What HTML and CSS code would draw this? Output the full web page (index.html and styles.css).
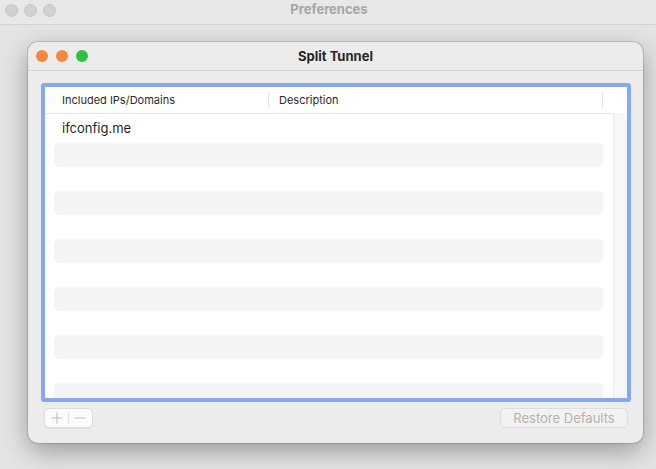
FILE: index.html
```html
<!DOCTYPE html>
<html>
<head>
<meta charset="utf-8">
<link rel="stylesheet" href="styles.css">
</head>
<body>
<div class="prefs-bar">
  <div class="lights">
    <span class="light gray"></span>
    <span class="light gray"></span>
    <span class="light gray"></span>
  </div>
  <div class="prefs-title">Preferences</div>
</div>
<div class="stage">
  <div class="sheet">
    <div class="sheet-bar">
      <div class="lights sheet-lights">
        <span class="light orange"></span>
        <span class="light orange"></span>
        <span class="light green"></span>
      </div>
      <div class="sheet-title">Split Tunnel</div>
    </div>
    <div class="sheet-body">
      <div class="ring">
        <div class="table-head">
          <div class="th th-main">Included IPs/Domains</div>
          <div class="th th-desc">Description</div>
          <div class="th-rest"></div>
        </div>
        <div class="table-body">
          <div class="rows">
            <div class="row"><span class="cell">ifconfig.me</span></div>
            <div class="row alt"></div>
            <div class="row"></div>
            <div class="row alt"></div>
            <div class="row"></div>
            <div class="row alt"></div>
            <div class="row"></div>
            <div class="row alt"></div>
            <div class="row"></div>
            <div class="row alt"></div>
            <div class="row"></div>
            <div class="row alt"></div>
          </div>
          <div class="track"></div>
        </div>
      </div>
      <div class="footer">
        <div class="seg">
          <span class="seg-btn">
            <svg width="12" height="12" viewBox="0 0 12 12"><path d="M6 0.5V11.5M0.5 6H11.5" stroke="#bdbdbd" stroke-width="1.1" fill="none"/></svg>
          </span>
          <span class="seg-div"></span>
          <span class="seg-btn">
            <svg width="12" height="12" viewBox="0 0 12 12"><path d="M0.5 6H11.5" stroke="#bdbdbd" stroke-width="1.1" fill="none"/></svg>
          </span>
        </div>
        <div class="restore">Restore Defaults</div>
      </div>
    </div>
  </div>
</div>
</body>
</html>
```

FILE: styles.css
```css
* { box-sizing: border-box; }
html, body { margin: 0; padding: 0; }
body {
  width: 656px;
  height: 469px;
  overflow: hidden;
  background: #e4e4e4;
  font-family: Inter, "Noto Sans", "Liberation Sans", sans-serif;
  color: #222;
}
.prefs-bar {
  position: relative;
  height: 25px;
  background: #e8e8e8;
  border-bottom: 1px solid #d2d2d2;
  display: flex;
  align-items: center;
  justify-content: center;
}
.lights {
  position: absolute;
  left: 5px;
  top: 4px;
  display: flex;
  gap: 7px;
}
.light {
  width: 12px;
  height: 12px;
  border-radius: 50%;
  display: block;
}
.light.gray { width: 13px; height: 13px; background: #d1d1d1; border: 1px solid #c6c6c6; }
.prefs-bar .lights { gap: 6px; }
.light.orange { background: #f6883d; }
.light.green { background: #2bc43c; }
.prefs-title {
  font-size: 13px;
  font-weight: 700;
  color: #a6a6a6;
  margin-top: -6px;
  margin-left: 2px;
}
.stage {
  padding: 17px 0 0 28px;
}
.sheet {
  width: 615px;
  height: 401px;
  background: #ececec;
  border-radius: 10px;
  box-shadow: 0 0 0 1px rgba(0,0,0,0.13), 0 8px 26px rgba(0,0,0,0.33);
  overflow: hidden;
}
.sheet-bar {
  position: relative;
  height: 29px;
  border-bottom: 1px solid #d4d4d4;
  display: flex;
  align-items: center;
  justify-content: center;
}
.sheet-lights {
  left: 8px;
  top: 8px;
  gap: 8px;
}
.sheet-title {
  font-size: 13px;
  font-weight: 700;
  color: #262626;
}
.sheet-body {
  padding: 12px 12px 0 13px;
}
.ring {
  width: 590px;
  height: 319px;
  border: 4px solid #86a9f2;
  border-radius: 3px;
  background: #fff;
  display: flex;
  flex-direction: column;
  overflow: hidden;
}
.table-head {
  height: 26px;
  display: flex;
  align-items: center;
  flex: none;
}
.th {
  font-size: 11px;
  color: #2c2c2c;
  height: 16px;
  line-height: 16px;
}
.th-main {
  width: 224px;
  padding-left: 17px;
  border-right: 1px solid #e2e2e2;
}
.th-desc {
  width: 334px;
  padding-left: 10px;
  border-right: 1px solid #e2e2e2;
}
.th-rest { flex: 1; }
.table-body {
  flex: 1;
  display: flex;
  min-height: 0;
}
.rows {
  width: 568px;
  border-top: 1px solid #e4e4e4;
  padding: 5px 10px 0 9px;
  overflow: hidden;
}
.row {
  height: 24px;
  border-radius: 5px;
  display: flex;
  align-items: center;
}
.row.alt { background: #f4f4f4; }
.cell {
  font-size: 13px;
  color: #1f1f1f;
  padding-left: 8px;
  margin-top: -6px;
}
.track {
  flex: 1;
  background: #f7f7f7;
  border-left: 1px solid #ececec;
}
.footer {
  display: flex;
  justify-content: space-between;
  align-items: center;
  margin-top: 6px;
  padding: 0 3px;
}
.seg {
  width: 49px;
  height: 20px;
  background: #fbfbfb;
  border: 1px solid #dcdcdc;
  border-radius: 5px;
  box-shadow: 0 1px 1px rgba(0,0,0,0.06);
  display: flex;
  align-items: center;
}
.seg-btn {
  width: 24px;
  display: flex;
  justify-content: center;
  align-items: center;
}
.seg-btn svg { display: block; }
.seg-div {
  width: 1px;
  height: 12px;
  background: #e0e0e0;
}
.restore {
  width: 128px;
  height: 20px;
  background: #f2f2f2;
  border: 1px solid #dedede;
  border-radius: 5px;
  font-size: 13px;
  color: #b3b3b3;
  display: flex;
  align-items: center;
  justify-content: center;
}
```
